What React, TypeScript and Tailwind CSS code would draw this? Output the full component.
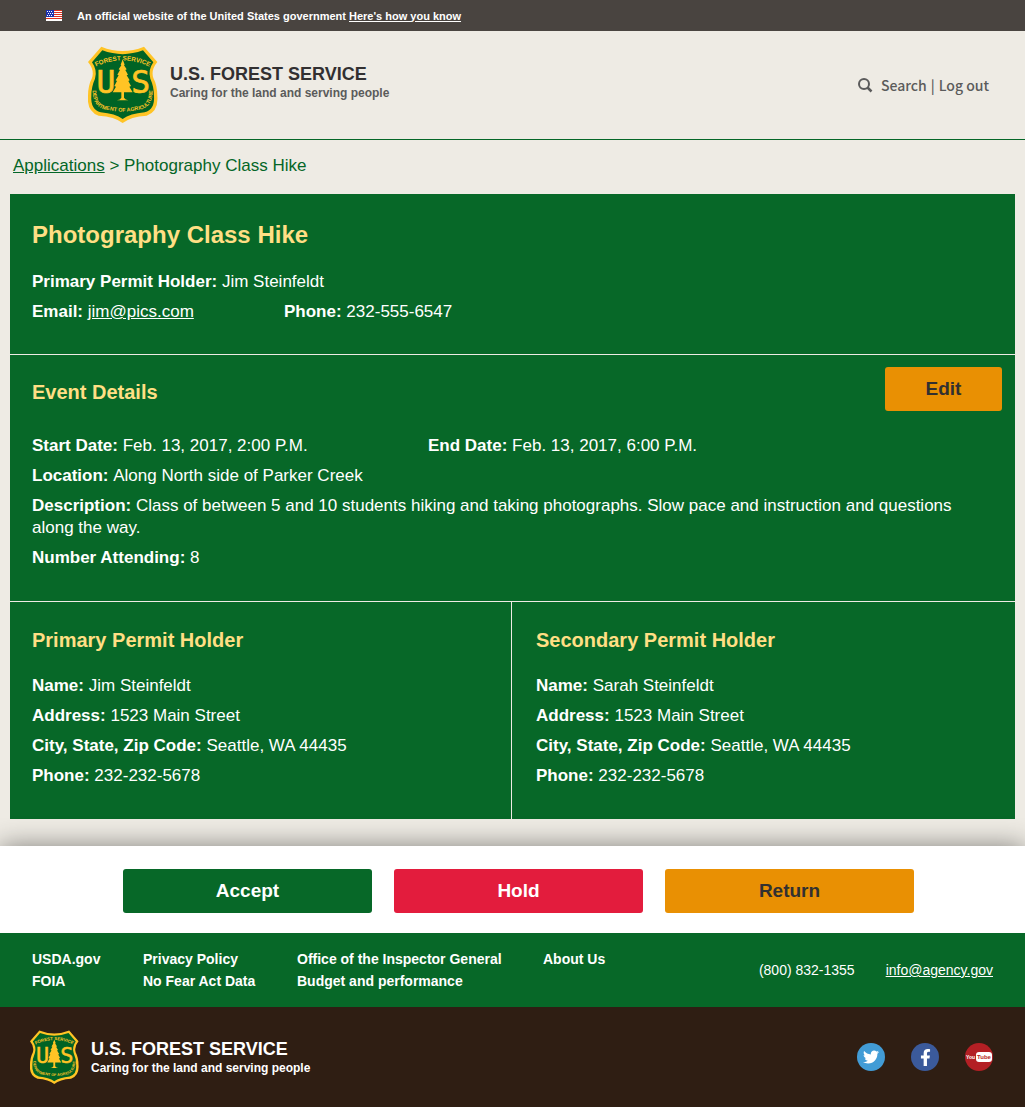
import type { ReactNode } from 'react';
import { FaFacebookF, FaTwitter } from 'react-icons/fa';

function Flag() {
  return (
    <svg viewBox="0 0 16 11" className="h-[11px] w-4" role="img" aria-label="U.S. flag">
      <rect width="16" height="11" fill="#fff" />
      {[0, 2, 4, 6, 8].map((y) => (
        <rect key={y} y={y} width="16" height="1" fill="#e02f1f" />
      ))}
      <rect width="8" height="7" fill="#1f33b0" />
      {[1, 3, 5].map((y) =>
        [1, 3, 5].map((x) => (
          <rect key={`${x}-${y}`} x={x + (y === 3 ? 1 : 0)} y={y} width="1" height="1" fill="#fff" />
        )),
      )}
    </svg>
  );
}

function Shield({ className, id }: { className: string; id: string }) {
  return (
    <svg viewBox="0 0 210 231" className={className} role="img" aria-label="Forest Service shield">
      <path
        d="M40 2 Q104 28 168 2 L208 48 Q188 72 196 96 Q208 118 208 150 Q212 196 176 209 Q128 212 104 231 Q80 212 32 209 Q-4 196 0 150 Q0 118 12 96 Q20 72 0 48 Z"
        fill="#ffc425"
      />
      <path
        d="M43 13 Q104 36 165 13 L196 49 Q179 73 187 98 Q198 122 198 150 Q201 190 170 199 Q126 203 104 219 Q82 203 38 199 Q7 190 10 150 Q10 122 21 98 Q29 73 12 49 Z"
        fill="#006325"
      />
      <path id={`${id}-top`} d="M16 66 Q104 20 192 66" fill="none" />
      <path id={`${id}-bottom`} d="M14 122 Q10 188 60 192 Q104 202 148 192 Q198 188 194 122" fill="none" />
      <g fill="#ffc425" className="font-['Liberation_Sans'] font-bold">
        <text fontSize="19" textAnchor="middle">
          <textPath href={`#${id}-top`} startOffset="50%">FOREST SERVICE</textPath>
        </text>
        <text fontSize="16" textAnchor="middle">
          <textPath href={`#${id}-bottom`} startOffset="50%">DEPARTMENT OF AGRICULTURE</textPath>
        </text>
      </g>
      <g
        fill="#ffc425"
        stroke="#ffc425"
        strokeWidth="2"
        textAnchor="middle"
        fontSize="94"
        className="font-['DejaVu_Sans_Mono']"
      >
        <text x="54" y="140">U</text>
        <text x="158" y="140">S</text>
      </g>
      <path
        d="M104 40 L110 56 L108 58 L116 70 L112 72 L120 86 L116 88 L125 103 L121 105 L129 120 L124 122 L134 139 L108 139 L108 155 Q112 161 121 163 L87 163 Q97 161 100 155 L100 139 L74 139 L84 122 L79 120 L87 105 L83 103 L92 88 L88 86 L96 72 L92 70 L100 58 L98 56 Z"
        fill="#ffc425"
        stroke="#006325"
        strokeWidth="3"
        paintOrder="stroke"
      />
    </svg>
  );
}

function YouTubeMark() {
  return (
    <svg viewBox="0 0 28 28" className="size-7" aria-hidden="true">
      <circle cx="14" cy="14" r="14" fill="#b31f24" />
      <rect x="11" y="9" width="16" height="10" rx="3" fill="#fff" />
      <g className="font-['Liberation_Sans'] font-bold">
        <text x="1" y="16" fontSize="5" fill="#fff">You</text>
        <text x="12" y="16" fontSize="6" fill="#b31f24">Tube</text>
      </g>
    </svg>
  );
}

function Field({ label, children, className = '' }: { label: string; children: ReactNode; className?: string }) {
  return (
    <div className={className}>
      <dt className="inline font-bold">{label}:</dt> <dd className="inline">{children}</dd>
    </div>
  );
}

function Holder({ title, name }: { title: string; name: string }) {
  return (
    <section className="pt-6 pr-5 pb-8">
      <h3 className="mb-[21px] text-xl leading-7 font-bold text-[#ffdf84]">{title}</h3>
      <dl className="flex flex-col gap-2">
        <Field label="Name">{name}</Field>
        <Field label="Address">1523 Main Street</Field>
        <Field label="City, State, Zip Code">Seattle, WA 44435</Field>
        <Field label="Phone">232-232-5678</Field>
      </dl>
    </section>
  );
}

const footerLinks = [
  ['USDA.gov', 'Privacy Policy', 'Office of the Inspector General', 'About Us'],
  ['FOIA', 'No Fear Act Data', 'Budget and performance'],
];

export default function App() {
  return (
    <div className="bg-[#eeebe4] font-['Liberation_Sans',Arial,sans-serif] text-[17px] leading-[22px]">
      <div className="flex h-[31px] items-center gap-[15px] bg-[#494440] pl-[46px] text-[11px] font-bold text-white">
        <Flag />
        <p>
          An official website of the United States government{' '}
          <a href="#official" className="underline">Here's how you know</a>
        </p>
      </div>

      <header className="flex h-[109px] items-start justify-between border-b border-b-[#046627] pr-9 pl-[88px]">
        <div className="flex items-start gap-3 pt-[15px]">
          <Shield id="header" className="h-[77px] w-[70px]" />
          <div className="pt-[18px] font-bold">
            <p className="text-lg leading-5 text-[#323031]">U.S. FOREST SERVICE</p>
            <p className="text-xs leading-[18px] text-[#5b5b5b]">Caring for the land and serving people</p>
          </div>
        </div>
        <nav className="flex items-center pt-[43px] font-['Noto_Sans_CJK_JP',sans-serif] text-sm leading-[22px] font-medium text-[#5b5b5b]">
          <svg viewBox="0 0 15 15" className="mr-2 size-[15px]" fill="none" stroke="currentColor" strokeWidth="2" aria-hidden="true">
            <circle cx="6" cy="6" r="5" />
            <path d="M9.500 9.500L13.500 13.500" strokeWidth="2.500" />
          </svg>
          <a href="#search">Search</a>
          <span className="mx-1">|</span>
          <a href="#logout">Log out</a>
        </nav>
      </header>

      <nav aria-label="Breadcrumb" className="px-[13px] pt-[15px] pb-[17px] text-[#046627]">
        <a href="#applications" className="underline">Applications</a> &gt; Photography Class Hike
      </nav>

      <main className="mx-2.5 mb-[27px] bg-[#076828] text-white">
        <section className="pt-[25px] pr-5 pb-[31px] pl-[22px]">
          <h1 className="mb-5 text-2xl leading-8 font-bold text-[#ffdf84]">Photography Class Hike</h1>
          <dl className="flex flex-col gap-2">
            <Field label="Primary Permit Holder">Jim Steinfeldt</Field>
            <div className="flex flex-wrap">
              <Field label="Email" className="w-[252px]">
                <a href="mailto:jim@pics.com" className="underline">jim@pics.com</a>
              </Field>
              <Field label="Phone">232-555-6547</Field>
            </div>
          </dl>
        </section>

        <section className="border-y border-[#eeebe4] pt-3 pb-8 pl-[22px]">
          <div className="mb-6 flex items-start justify-between pr-[13px]">
            <h2 className="pt-[11px] text-xl leading-7 font-bold text-[#ffdf84]">Event Details</h2>
            <button type="button" className="h-11 w-[117px] rounded-[3px] bg-[#e99003] text-[19px] font-bold text-[#323031]">
              Edit
            </button>
          </div>
          <dl className="flex flex-col gap-2 pr-10">
            <div className="flex flex-wrap">
              <Field label="Start Date" className="w-[396px]">Feb. 13, 2017, 2:00 P.M.</Field>
              <Field label="End Date">Feb. 13, 2017, 6:00 P.M.</Field>
            </div>
            <Field label="Location">Along North side of Parker Creek</Field>
            <Field label="Description">
              Class of between 5 and 10 students hiking and taking photographs. Slow pace and instruction and
              questions along the way.
            </Field>
            <Field label="Number Attending">8</Field>
          </dl>
        </section>

        <div className="grid grid-cols-[501fr_504fr]">
          <div className="pl-[22px]">
            <Holder title="Primary Permit Holder" name="Jim Steinfeldt" />
          </div>
          <div className="border-l border-[#eeebe4] pl-6">
            <Holder title="Secondary Permit Holder" name="Sarah Steinfeldt" />
          </div>
        </div>
      </main>

      <div className="grid grid-cols-3 gap-[22px] bg-white pt-[23px] pr-[111px] pb-5 pl-[123px] text-[19px] font-bold shadow-[0_0_25px_rgba(0,0,0,0.45)]">
        <button type="button" className="h-11 rounded-[3px] bg-[#076828] text-white">Accept</button>
        <button type="button" className="h-11 rounded-[3px] bg-[#e31c3d] text-white">Hold</button>
        <button type="button" className="h-11 rounded-[3px] bg-[#e99003] text-[#323031]">Return</button>
      </div>

      <footer className="relative text-white">
        <div className="flex items-center justify-between bg-[#076828] py-[15px] pr-8 pl-8 text-sm leading-[22px]">
          <nav className="grid grid-cols-[111px_154px_246px_auto] font-bold">
            {footerLinks.flat().map((label) => (
              <a key={label} href="#footer">{label}</a>
            ))}
          </nav>
          <div className="flex gap-[31px]">
            <span>(800) 832-1355</span>
            <a href="mailto:info@agency.gov" className="underline">info@agency.gov</a>
          </div>
        </div>
        <div className="flex h-[100px] items-center justify-between bg-[#2f1e13] pr-8 pl-[30px]">
          <div className="flex items-center gap-3">
            <Shield id="footer" className="h-[54px] w-[49px]" />
            <div className="pt-0.5 font-bold">
              <p className="text-lg leading-5">U.S. FOREST SERVICE</p>
              <p className="text-xs leading-[18px]">Caring for the land and serving people</p>
            </div>
          </div>
          <div className="flex gap-[26px]">
            <a href="#twitter" aria-label="Twitter" className="flex size-7 items-center justify-center rounded-full bg-[#429cd6]">
              <FaTwitter size={16} />
            </a>
            <a href="#facebook" aria-label="Facebook" className="flex size-7 items-center justify-center rounded-full bg-[#3b5a9b]">
              <FaFacebookF size={17} />
            </a>
            <a href="#youtube" aria-label="YouTube">
              <YouTubeMark />
            </a>
          </div>
        </div>
      </footer>
    </div>
  );
}
